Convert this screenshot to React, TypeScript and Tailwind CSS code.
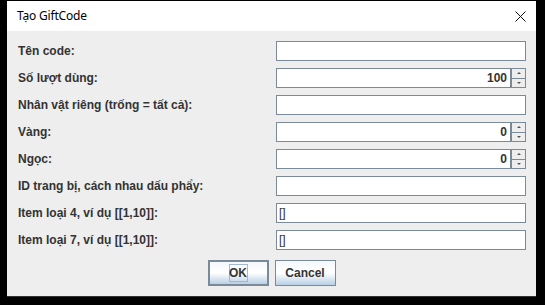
import React from "react"

const rows: { label: string; value?: string; spinner?: boolean; bracket?: boolean }[] = [
  { label: "Tên code:" },
  { label: "Số lượt dùng:", value: "100", spinner: true },
  { label: "Nhân vật riêng (trống = tất cả):" },
  { label: "Vàng:", value: "0", spinner: true },
  { label: "Ngọc:", value: "0", spinner: true },
  { label: "ID trang bị, cách nhau dấu phẩy:" },
  { label: "Item loại 4, ví dụ [[1,10]]:", value: "[]", bracket: true },
  { label: "Item loại 7, ví dụ [[1,10]]:", value: "[]", bracket: true },
]

function Spinner() {
  return (
    <div className="flex flex-col w-[15px] h-[20px] border border-[#7a8a99] bg-[#eeeeee]">
      <div className="flex-1 flex items-center justify-center border-b border-[#7a8a99]">
        <span className="block w-0 h-0 border-x-[2px] border-x-transparent border-b-[2px] border-b-[#555]" />
      </div>
      <div className="flex-1 flex items-center justify-center">
        <span className="block w-0 h-0 border-x-[2px] border-x-transparent border-t-[2px] border-t-[#555]" />
      </div>
    </div>
  )
}

export default function App() {
  return (
    <div className="w-[545px] h-[305px] bg-black pl-[7px] pt-[1px] font-['Liberation_Sans',Arial,sans-serif]">
      <div className="w-[529px] h-[296px] flex flex-col bg-[#eeeeee] border-b border-[#333]">
        {/* title bar */}
        <div className="h-[30px] bg-white flex items-center justify-between pl-[10px] pr-[9px]">
          <span className="text-[12px] text-black font-['Noto_Sans',sans-serif] tracking-[-0.2px]">Tạo GiftCode</span>
          <svg width="11" height="11" viewBox="0 0 11 11" className="mr-[1px]">
            <path d="M0.5 0.5 L10.5 10.5 M10.5 0.5 L0.5 10.5" stroke="#111" strokeWidth="1" fill="none" />
          </svg>
        </div>

        <div className="flex-1 flex flex-col pt-[10px] pl-[11px] pr-[10px]">
          <div className="flex flex-col gap-[7px]">
            {rows.map((r) => (
              <div key={r.label} className="flex items-center h-[20px]">
                <span className="w-[258px] text-[12px] font-bold text-[#333333] leading-none">{r.label}</span>
                <div className="flex w-[250px] h-[20px]">
                  <div className="flex-1 flex items-center bg-white border border-[#7a8a99] px-[2px]">
                    {r.value && !r.bracket && (
                      <span className="ml-auto text-[12px] font-bold text-[#333333] leading-none pr-[1px]">{r.value}</span>
                    )}
                    {r.bracket && (
                      <span className="text-[12px] text-[#333333] leading-none">{r.value}</span>
                    )}
                  </div>
                  {r.spinner && <Spinner />}
                </div>
              </div>
            ))}
          </div>

          <div className="flex justify-center gap-[6px] mt-[10px] mr-[1px]">
            <button className="w-[61px] h-[26px] border-2 border-[#7a8a99] bg-gradient-to-b from-[#f4f8fc] via-white to-[#b8cfe5] flex items-center justify-center">
              <span className="w-[19px] h-[18px] flex items-center justify-center border border-[#a3b8cc] text-[12px] font-bold text-[#333333] leading-none">OK</span>
            </button>
            <button className="w-[61px] h-[26px] border border-[#7a8a99] bg-gradient-to-b from-[#f4f8fc] via-white to-[#b8cfe5] flex items-center justify-center">
              <span className="text-[12px] font-bold text-[#333333] leading-none">Cancel</span>
            </button>
          </div>
        </div>
      </div>
    </div>
  )
}
